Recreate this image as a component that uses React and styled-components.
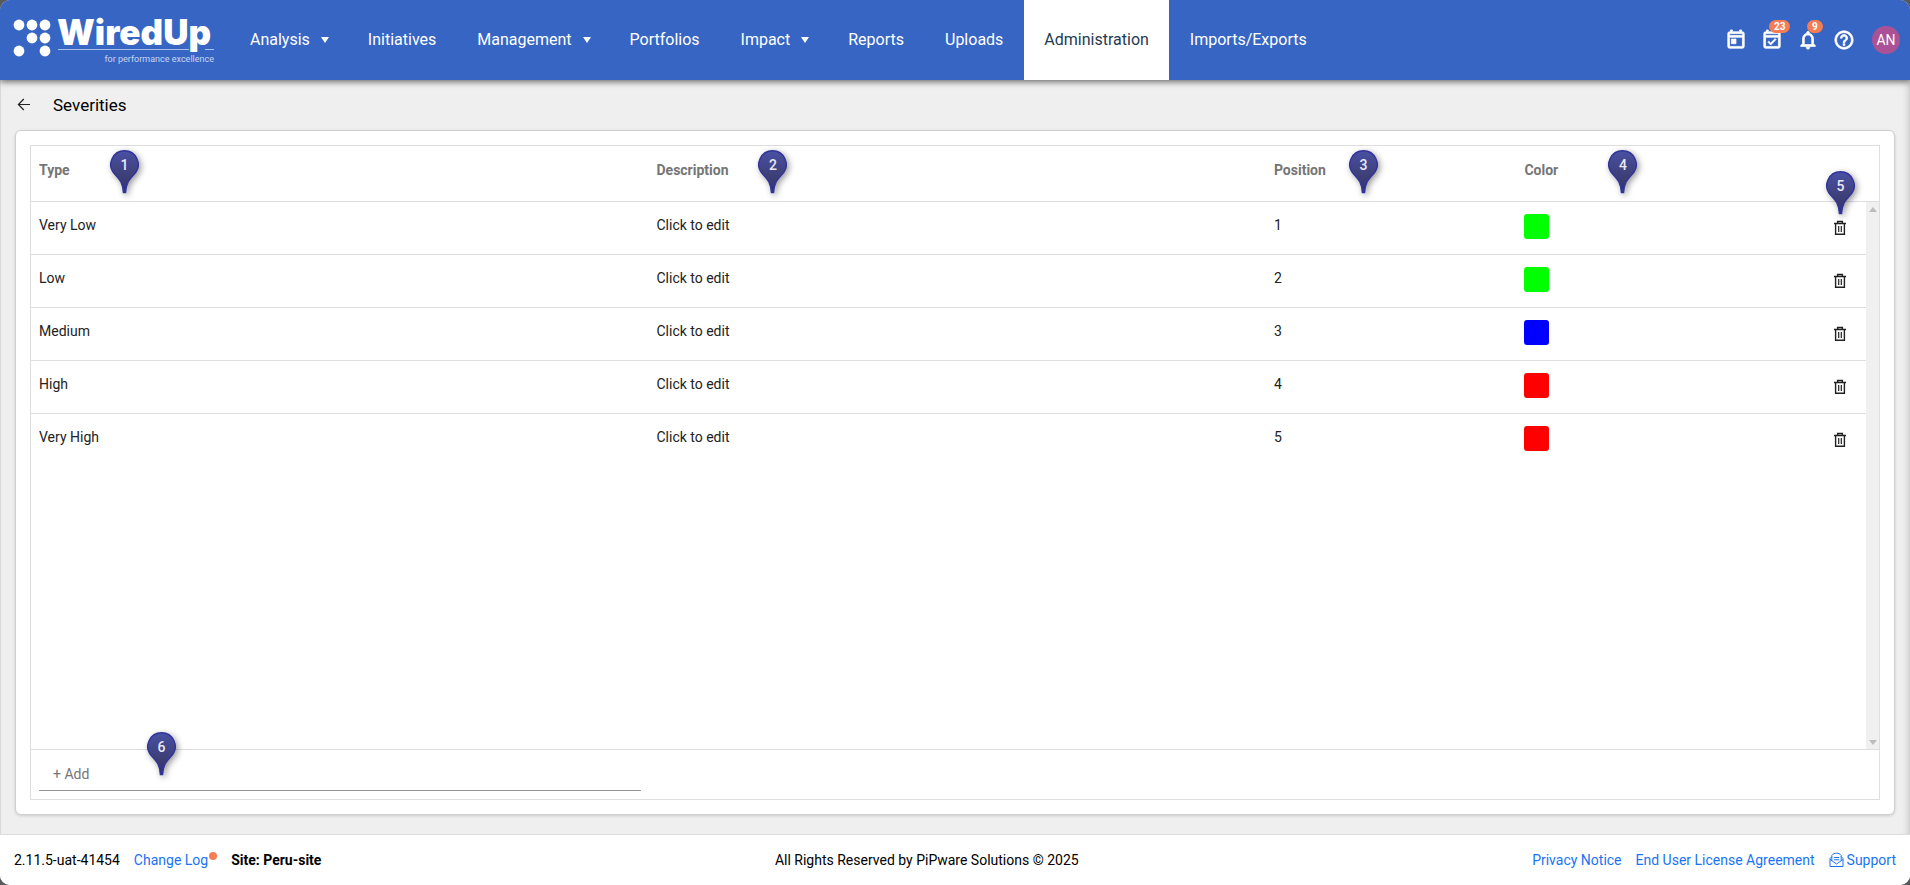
import styled, { createGlobalStyle } from "styled-components";
import {
   MdHelpOutline,
   MdOutlineEventAvailable,
   MdNotificationsNone,
   MdOutlineToday,
} from "react-icons/md";

const GlobalStyle = createGlobalStyle`
   *, *::before, *::after {
      box-sizing: border-box;
   }

   body {
      margin: 0;
      background: #58595b;
      color: #000;
      font-family: Roboto, "Liberation Sans", sans-serif;
      font-size: 14px;
      line-height: 16px;
   }

   button, input {
      font: inherit;
   }
`;

const Page = styled.div`
   display: flex;
   flex-direction: column;
   min-height: 100vh;
   border-radius: 10px;
   overflow: hidden;
   background: #efefef;
`;

/* ---------- header ---------- */

const Header = styled.header`
   position: relative;
   display: flex;
   align-items: stretch;
   height: 80px;
   padding-right: 10px;
   background: #3765c3;
   box-shadow: 0 2px 6px rgba(0, 0, 0, 0.55);
`;

const LogoLink = styled.a`
   display: flex;
   align-items: center;
   width: 230px;
   padding-left: 12px;
`;

const Nav = styled.nav`
   display: flex;
   flex: 1;
   gap: 1px;
`;

const NavLink = styled.a`
   display: flex;
   align-items: center;
   gap: 11px;
   padding: 0 ${({ $menu }) => ($menu ? 18 : 20)}px 0 20px;
   background: ${({ $active }) => ($active ? "#fff" : "transparent")};
   color: ${({ $active }) => ($active ? "#1f3a54" : "#fff")};
   font-size: 16px;
   text-decoration: none;
`;

const Caret = styled.span`
   border: 4px solid transparent;
   border-top: 6px solid #fff;
   border-bottom: 0;
`;

const Tools = styled.div`
   display: flex;
   align-items: center;
   gap: 14px;
`;

const ToolButton = styled.button`
   position: relative;
   display: flex;
   padding: 0;
   border: 0;
   background: none;
   color: #fff;
   cursor: pointer;

   path[fill="none"] {
      stroke: none;
   }

   path:not([fill="none"]) {
      stroke-width: 0.8;
   }
`;

const Badge = styled.span`
   position: absolute;
   top: -9px;
   left: ${({ $left }) => $left}px;
   padding: 0 5px;
   border-radius: 7px;
   background: #f47d55;
   font-size: 10px;
   font-weight: 700;
   line-height: 13px;
`;

const Avatar = styled.button`
   width: 28px;
   height: 28px;
   margin-left: 3px;
   padding: 0;
   border: 0;
   border-radius: 50%;
   background: #ab5297;
   color: #fff;
   cursor: pointer;
`;

/* ---------- content ---------- */

const Main = styled.main`
   display: flex;
   flex: 1;
   flex-direction: column;
   padding: 0 15px 19px 14px;
   border-left: 1px solid #d9d9d9;
   box-shadow: inset -8px 0 8px -8px rgba(0, 0, 0, 0.25);
`;

const TitleBar = styled.div`
   display: flex;
   align-items: center;
   gap: 20px;
   height: 50px;
`;

const BackButton = styled.button`
   display: flex;
   padding: 0;
   border: 0;
   background: none;
   color: #222;
   cursor: pointer;
`;

const Title = styled.h1`
   margin: 0;
   font-size: 17px;
   font-weight: 400;
   line-height: 24px;
`;

const Card = styled.section`
   display: flex;
   flex: 1;
   padding: 14px;
   border: 1px solid #cfcfcf;
   border-radius: 6px;
   background: #fff;
   box-shadow: 0 1px 3px rgba(0, 0, 0, 0.15);
`;

const Grid = styled.div`
   display: flex;
   flex: 1;
   flex-direction: column;
   border: 1px solid #dedede;
`;

const GridBody = styled.div`
   display: flex;
   flex: 1;
   align-items: stretch;
`;

const TableArea = styled.div`
   flex: 1;
`;

const Table = styled.table`
   width: 100%;
   border-collapse: separate;
   border-spacing: 0;
   table-layout: fixed;
`;

const Th = styled.th`
   position: relative;
   width: ${({ $width }) => $width || "auto"};
   height: 56px;
   padding: 16px 8px 0;
   border-bottom: 1px solid #dedede;
   color: #757575;
   font-weight: 700;
   text-align: left;
   vertical-align: top;
`;

const Td = styled.td`
   height: 53px;
   padding: ${({ $top }) => $top || 15}px 8px 0;
   color: #222;
   text-align: ${({ $align }) => $align || "left"};
   vertical-align: top;

   tr:not(:last-child) > & {
      border-bottom: 1px solid #dedede;
   }
`;

const Swatch = styled.button`
   display: block;
   width: 25px;
   height: 25px;
   padding: 0;
   border: 0;
   border-radius: 3px;
   background: ${({ $color }) => $color};
   cursor: pointer;
`;

const DeleteButton = styled.button`
   display: inline-flex;
   margin-right: 11px;
   padding: 0;
   border: 0;
   background: none;
   color: #222;
   cursor: pointer;
`;

const ScrollColumn = styled.div`
   display: flex;
   flex-direction: column;
   width: 13px;
`;

const ScrollHead = styled.div`
   height: 56px;
   border-bottom: 1px solid #dedede;
`;

const ScrollTrack = styled.div`
   display: flex;
   flex: 1;
   flex-direction: column;
   align-items: center;
   justify-content: space-between;
   padding: 5px 0 4px;
   background: #f0f0f0;
`;

const ScrollArrow = styled.span`
   border: 4px solid transparent;
   border-${({ $down }) => ($down ? "top" : "bottom")}: 5px solid #bdbdbd;
   border-${({ $down }) => ($down ? "bottom" : "top")}: 0;
`;

const AddRow = styled.div`
   position: relative;
   height: 50px;
   padding: 8px;
   border-top: 1px solid #dedede;
`;

const AddInput = styled.input`
   display: block;
   width: calc(33.3% - 8px);
   height: 33px;
   padding: 0 14px;
   border: 0;
   border-bottom: 1px solid #949494;
   outline: 0;
   background: none;

   &::placeholder {
      color: #757575;
      opacity: 1;
   }
`;

const PinBox = styled.span`
   position: absolute;
   top: ${({ $top }) => $top}px;
   left: ${({ $left }) => ($left === undefined ? "auto" : `${$left}px`)};
   right: ${({ $right }) => ($right === undefined ? "auto" : `${$right}px`)};
   z-index: 1;
   width: 29px;
   height: 43px;
   color: #e9e9f5;
   font-size: 14px;
   font-weight: 500;
   line-height: 30px;
   text-align: center;
   pointer-events: none;

   svg {
      position: absolute;
      inset: 0;
      z-index: -1;
      overflow: visible;
      filter: drop-shadow(2px 2px 3px rgba(0, 0, 0, 0.4));
   }
`;

/* ---------- footer ---------- */

const Footer = styled.footer`
   display: flex;
   align-items: center;
   justify-content: space-between;
   height: 51px;
   padding: 0 14px;
   border-top: 1px solid #dcdcdc;
   background: #fff;
`;

const FooterGroup = styled.div`
   display: flex;
   align-items: center;
   gap: 14px;
`;

const FooterLink = styled.a`
   display: inline-flex;
   align-items: center;
   gap: 3px;
   color: #1a73f5;
   text-decoration: none;
`;

const ChangeLog = styled.span`
   display: flex;
   align-items: flex-start;
   gap: 1px;
`;

const Dot = styled.span`
   width: 8px;
   height: 8px;
   border-radius: 50%;
   background: #f47d55;
`;

const navItems = [
   { label: "Analysis", menu: true },
   { label: "Initiatives" },
   { label: "Management", menu: true },
   { label: "Portfolios" },
   { label: "Impact", menu: true },
   { label: "Reports" },
   { label: "Uploads" },
   { label: "Administration", active: true },
   { label: "Imports/Exports" },
];

const severities = [
   { type: "Very Low", position: 1, color: "#00ff00" },
   { type: "Low", position: 2, color: "#00ff00" },
   { type: "Medium", position: 3, color: "#0000ff" },
   { type: "High", position: 4, color: "#ff0000" },
   { type: "Very High", position: 5, color: "#ff0000" },
];

const logoDots = [
   [7, 13], [20, 13], [33, 13],
   [20, 26], [33, 26],
   [7, 39], [33, 39],
];

function Logo() {
   return (
      <svg width="214" height="56" viewBox="0 0 214 56" fill="#fff" overflow="visible" role="img" aria-label="WiredUp">
         {logoDots.map(([x, y]) => (
            <circle key={`${x}-${y}`} cx={x} cy={y} r="5.4" />
         ))}
         <text x="45" y="33" fontFamily="Inter, sans-serif" fontSize="35" fontWeight="900">
            WiredUp
         </text>
         <path d="M46 37.5H177M193 37.5H202" stroke="#a9c0ea" />
         <text x="202" y="50" textAnchor="end" fontFamily="Roboto, sans-serif" fontSize="9" fill="#c6d5f1">
            for performance excellence
         </text>
      </svg>
   );
}

function ArrowLeft() {
   return (
      <svg width="18" height="18" viewBox="0 0 18 18" fill="none" stroke="currentColor" strokeWidth="1.2">
         <path d="M15 8.5H3.6M8.8 3L3.4 8.5L8.8 14" />
      </svg>
   );
}

function Trash() {
   return (
      <svg width="14" height="16" viewBox="0 0 14 16" fill="none" stroke="currentColor" strokeWidth="1.4">
         <path d="M1 3.5H13M4.6 3.4V1.5H9.4V3.4M2.6 3.8V14.3H11.4V3.8" />
         <path d="M5.7 6V12M8.3 6V12" strokeWidth="1.2" />
      </svg>
   );
}

function MailOpen() {
   return (
      <svg width="15" height="16" viewBox="0 0 15 16" fill="none" stroke="currentColor">
         <path d="M1 6.5V14.5H14V6.5M1 7.5L7.5 12L14 7.5" />
         <path d="M1 6.5L2.8 4.6V3.4C4 1.8 5.6 1.2 7.5 1.2S11 1.8 12.2 3.4V4.6L14 6.5M2.8 4.4V8.6M12.2 4.4V8.6" />
         <path d="M4.8 5.5H10.2M4.8 7.8H10.2" />
      </svg>
   );
}

function Pin({ number, top, left, right }) {
   return (
      <PinBox $top={top} $left={left} $right={right}>
         <svg width="29" height="43" viewBox="0 0 29 43">
            <defs>
               <linearGradient id={`pin-${number}`} x1="0" y1="0" x2="0" y2="1">
                  <stop offset="0" stopColor="#4a50a4" />
                  <stop offset="0.7" stopColor="#3b3c70" />
                  <stop offset="1" stopColor="#2c2f90" />
               </linearGradient>
            </defs>
            <path
               d="M14.5 0.8A13.7 13.7 0 0 1 25 23.3C19.8 29 16.4 31.5 15.6 42.5H13.4C12.6 31.5 9.2 29 4 23.3A13.7 13.7 0 0 1 14.5 0.8Z"
               fill={`url(#pin-${number})`}
               stroke="#31349a"
               strokeWidth="1.4"
            />
         </svg>
         {number}
      </PinBox>
   );
}

function AppHeader() {
   return (
      <Header>
         <LogoLink href="#home">
            <Logo />
         </LogoLink>
         <Nav>
            {navItems.map(({ label, menu, active }) => (
               <NavLink key={label} href="#nav" $menu={menu} $active={active}>
                  {label}
                  {menu && <Caret />}
               </NavLink>
            ))}
         </Nav>
         <Tools>
            <ToolButton aria-label="Calendar">
               <MdOutlineToday size={22} />
            </ToolButton>
            <ToolButton aria-label="Tasks">
               <MdOutlineEventAvailable size={22} />
               <Badge $left={8}>23</Badge>
            </ToolButton>
            <ToolButton aria-label="Notifications">
               <MdNotificationsNone size={22} />
               <Badge $left={10}>9</Badge>
            </ToolButton>
            <ToolButton aria-label="Help">
               <MdHelpOutline size={22} />
            </ToolButton>
            <Avatar>AN</Avatar>
         </Tools>
      </Header>
   );
}

function SeverityTable() {
   return (
      <Table>
         <thead>
            <tr>
               <Th $width="33.65%">
                  Type
                  <Pin number={1} top={4} left={79} />
               </Th>
               <Th $width="33.65%">
                  Description
                  <Pin number={2} top={4} left={110} />
               </Th>
               <Th $width="13.65%">
                  Position
                  <Pin number={3} top={4} left={83} />
               </Th>
               <Th>
                  Color
                  <Pin number={4} top={4} left={92} />
               </Th>
               <Th $width="60px" aria-label="Actions">
                  <Pin number={5} top={25} right={11} />
               </Th>
            </tr>
         </thead>
         <tbody>
            {severities.map(({ type, position, color }) => (
               <tr key={type}>
                  <Td>{type}</Td>
                  <Td>Click to edit</Td>
                  <Td>{position}</Td>
                  <Td $top={12}>
                     <Swatch $color={color} aria-label={`${type} color`} />
                  </Td>
                  <Td $top={18} $align="right">
                     <DeleteButton aria-label={`Delete ${type}`}>
                        <Trash />
                     </DeleteButton>
                  </Td>
               </tr>
            ))}
         </tbody>
      </Table>
   );
}

function App() {
   return (
      <>
         <GlobalStyle />
         <Page>
            <AppHeader />
            <Main>
               <TitleBar>
                  <BackButton aria-label="Back">
                     <ArrowLeft />
                  </BackButton>
                  <Title>Severities</Title>
               </TitleBar>
               <Card>
                  <Grid>
                     <GridBody>
                        <TableArea>
                           <SeverityTable />
                        </TableArea>
                        <ScrollColumn aria-hidden="true">
                           <ScrollHead />
                           <ScrollTrack>
                              <ScrollArrow />
                              <ScrollArrow $down />
                           </ScrollTrack>
                        </ScrollColumn>
                     </GridBody>
                     <AddRow>
                        <AddInput type="text" placeholder="+ Add" aria-label="Add severity" />
                        <Pin number={6} top={-18} left={116} />
                     </AddRow>
                  </Grid>
               </Card>
            </Main>
            <Footer>
               <FooterGroup>
                  <span>2.11.5-uat-41454</span>
                  <ChangeLog>
                     <FooterLink href="#changelog">Change Log</FooterLink>
                     <Dot />
                  </ChangeLog>
                  <strong>Site: Peru-site</strong>
               </FooterGroup>
               <span>All Rights Reserved by PiPware Solutions © 2025</span>
               <FooterGroup>
                  <FooterLink href="#privacy">Privacy Notice</FooterLink>
                  <FooterLink href="#eula">End User License Agreement</FooterLink>
                  <FooterLink href="#support">
                     <MailOpen />
                     Support
                  </FooterLink>
               </FooterGroup>
            </Footer>
         </Page>
      </>
   );
}

export default App;
